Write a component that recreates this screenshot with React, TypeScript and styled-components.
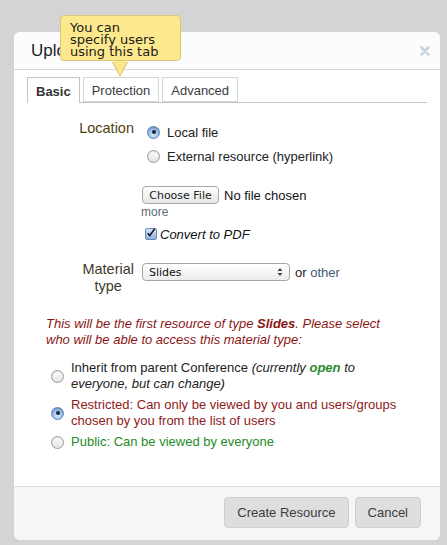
import styled, { createGlobalStyle } from "styled-components";

const GlobalStyle = createGlobalStyle`
  html, body {
    margin: 0;
    padding: 0;
    background: #d4d4d4;
  }
  body {
    font-family: "Liberation Sans", Arial, sans-serif;
    font-size: 13px;
    color: #222;
  }
`;

const Page = styled.div`
  width: 447px;
  height: 545px;
  padding: 32px 0 0 14px;
  box-sizing: border-box;
  position: relative;
`;

const Dialog = styled.div`
  display: flex;
  flex-direction: column;
  width: 426px;
  height: 508px;
  background: #fff;
  border-radius: 6px;
  overflow: hidden;
`;

const Header = styled.div`
  display: flex;
  align-items: center;
  justify-content: space-between;
  height: 37px;
  padding: 0 10px 0 17px;
  background: #fcfcfc;
  border-bottom: 1px solid #d8d8d8;
`;

const Title = styled.div`
  font-size: 17px;
  color: #1e1e1e;
`;

const Body = styled.div`
  flex: 1;
  padding: 7px 13px 0;
`;

const TabBar = styled.div`
  display: flex;
  gap: 3px;
  height: 26px;
  border-bottom: 1px solid #c4c4c4;
  box-sizing: border-box;
`;

const Tab = styled.div<{ $active?: boolean }>`
  display: flex;
  align-items: center;
  padding: 0 8px;
  height: ${(p) => (p.$active ? "26px" : "25px")};
  box-sizing: border-box;
  border: 1px solid ${(p) => (p.$active ? "#c4c4c4" : "#d6d6d6")};
  border-bottom: ${(p) => (p.$active ? "none" : "1px solid #d6d6d6")};
  background: #fff;
  font-weight: ${(p) => (p.$active ? "bold" : "normal")};
  color: ${(p) => (p.$active ? "#333" : "#3c3c3c")};
  font-size: 13px;
  margin-bottom: ${(p) => (p.$active ? "-1px" : "0")};
  padding-top: 1px;
`;

const FormGrid = styled.div`
  display: grid;
  grid-template-columns: 115px 1fr;
  margin-top: 17px;
`;

const Label = styled.div`
  text-align: right;
  padding-right: 8px;
  color: #4f3f12;
  font-size: 14.5px;
  line-height: 16px;
`;

const LabelBlock = styled.span`
  display: inline-block;
  text-align: center;
  line-height: 17px;
  color: #3f3a2a;
`;

const Fields = styled.div`
  display: flex;
  flex-direction: column;
`;

const OptionRow = styled.label`
  display: flex;
  align-items: center;
  gap: 7px;
  height: 24px;
  padding-left: 5px;
  color: #222;
`;

const RadioDot = styled.span<{ $checked?: boolean }>`
  display: inline-flex;
  align-items: center;
  justify-content: center;
  flex: 0 0 auto;
  width: 13px;
  height: 13px;
  border-radius: 50%;
  box-sizing: border-box;
  border: 1px solid ${(p) => (p.$checked ? "#5b7fae" : "#9a9a9a")};
  background: ${(p) =>
    p.$checked
      ? "radial-gradient(circle at 50% 70%, #d6e8fb 0%, #8fb6e6 60%, #6d9bd6 100%)"
      : "linear-gradient(#fdfdfd, #e2e2e2)"};
  box-shadow: inset 0 1px 1px rgba(0, 0, 0, 0.12);

  &::after {
    content: "";
    display: ${(p) => (p.$checked ? "block" : "none")};
    width: 4px;
    height: 4px;
    border-radius: 50%;
    background: #1c2636;
  }
`;

const FileRow = styled.div`
  display: flex;
  align-items: center;
  gap: 5px;
  margin-top: 17px;
  height: 20px;
`;

const FileButton = styled.span`
  display: inline-flex;
  align-items: center;
  justify-content: center;
  width: 77px;
  height: 18px;
  box-sizing: border-box;
  border: 1px solid #a8a8a8;
  border-radius: 4px;
  background: linear-gradient(#ffffff, #e6e6e6);
  font-family: "DejaVu Sans", sans-serif;
  font-size: 11px;
  color: #222;
`;

const FileText = styled.span`
  font-size: 13px;
  color: #111;
`;

const MoreLink = styled.div`
  margin-left: -1px;
  line-height: 14px;
  color: #5f6b78;
  font-size: 12px;
`;

const CheckRow = styled.label`
  display: flex;
  align-items: center;
  gap: 3px;
  height: 18px;
  margin-top: 6px;
  padding-left: 3px;
  font-style: italic;
  color: #111;
`;

const CheckBox = styled.span`
  display: inline-flex;
  align-items: center;
  justify-content: center;
  width: 12px;
  height: 12px;
  box-sizing: border-box;
  border: 1px solid #6f8db3;
  border-radius: 2px;
  background: linear-gradient(#d3e4f7, #8db2e0);
`;

const MaterialGrid = styled(FormGrid)`
  margin-top: 18px;
`;

const SelectRow = styled.div`
  display: flex;
  align-items: center;
  gap: 5px;
  height: 18px;
  margin-top: 2px;
`;

const SelectBox = styled.div`
  display: flex;
  align-items: center;
  justify-content: space-between;
  width: 148px;
  height: 18px;
  box-sizing: border-box;
  padding: 0 6px 0 6px;
  border: 1px solid #a6a6a6;
  border-radius: 4px;
  background: linear-gradient(#ffffff, #ececec);
  font-family: "DejaVu Sans", sans-serif;
  font-size: 11px;
  color: #111;
`;

const OrText = styled.span`
  color: #222;
  font-size: 13px;
`;

const OtherLink = styled.span`
  color: #3d5878;
`;

const Notice = styled.p`
  margin: 21px 32px 0 19px;
  font-style: italic;
  line-height: 16px;
  color: #8a1616;
`;

const RadioList = styled.div`
  display: flex;
  flex-direction: column;
  gap: 5px;
  margin: 12px 19px 0 24px;
`;

const AccessOption = styled.div<{ $tone?: "red" | "green" }>`
  display: flex;
  align-items: center;
  gap: 7px;
  line-height: 16px;
  color: ${(p) =>
    p.$tone === "red" ? "#8e1b1b" : p.$tone === "green" ? "#1f8a28" : "#222"};
`;

const Open = styled.b`
  color: #2a8b2a;
`;

const Footer = styled.div`
  display: flex;
  justify-content: flex-end;
  gap: 6px;
  height: 54px;
  box-sizing: border-box;
  padding: 10px 19px 0 0;
  background: #f6f6f6;
  border-top: 1px solid #dcdcdc;
`;

const Button = styled.span`
  display: inline-flex;
  align-items: center;
  height: 31px;
  box-sizing: border-box;
  padding: 0 12px;
  border: 1px solid #d0d0d0;
  border-radius: 4px;
  background: #dedede;
  color: #3c3c3c;
  font-size: 13px;
`;

const Tooltip = styled.div`
  position: absolute;
  left: 60px;
  top: 15px;
  width: 121px;
  height: 46px;
  box-sizing: border-box;
  padding: 6px 8px 0 9px;
  background: #fde98d;
  border: 1px solid #dcc676;
  border-radius: 4px;
  font-family: "DejaVu Sans", sans-serif;
  font-size: 13px;
  line-height: 12px;
  color: #1a1a1a;

  &::before,
  &::after {
    content: "";
    position: absolute;
    border-style: solid;
    border-color: transparent;
  }
  &::before {
    left: 51px;
    top: 46px;
    border-width: 15px 8px 0 8px;
    border-top-color: #dcc676;
  }
  &::after {
    left: 52px;
    top: 45px;
    border-width: 14px 7px 0 7px;
    border-top-color: #fde98d;
  }
`;

const CloseIcon = () => (
  <svg width="10" height="10" viewBox="0 0 10 10">
    <path d="M1.5 1.5 L8.5 8.5 M8.5 1.5 L1.5 8.5" stroke="#c9d2df" strokeWidth="2.6" strokeLinecap="round" />
  </svg>
);

const CheckMark = () => (
  <svg width="12" height="12" viewBox="0 0 12 12" style={{ marginTop: -2 }}>
    <path d="M2 6.2 L4.6 9 L10.5 0.8" stroke="#111" strokeWidth="1.8" fill="none" />
  </svg>
);

const SelectArrows = () => (
  <svg width="6" height="10" viewBox="0 0 6 10">
    <path d="M0.5 4 L3 1 L5.5 4 Z M0.5 6 L3 9 L5.5 6 Z" fill="#444" />
  </svg>
);

export default function App() {
  return (
    <Page>
      <GlobalStyle />
      <Dialog>
        <Header>
          <Title>Upload Material</Title>
          <CloseIcon />
        </Header>
        <Body>
          <TabBar>
            <Tab $active>Basic</Tab>
            <Tab>Protection</Tab>
            <Tab>Advanced</Tab>
          </TabBar>

          <FormGrid>
            <Label>Location</Label>
            <Fields>
              <OptionRow>
                <RadioDot $checked />
                Local file
              </OptionRow>
              <OptionRow>
                <RadioDot />
                External resource (hyperlink)
              </OptionRow>
              <FileRow>
                <FileButton>Choose File</FileButton>
                <FileText>No file chosen</FileText>
              </FileRow>
              <MoreLink>more</MoreLink>
              <CheckRow>
                <CheckBox>
                  <CheckMark />
                </CheckBox>
                Convert to PDF
              </CheckRow>
            </Fields>
          </FormGrid>

          <MaterialGrid>
            <Label>
              <LabelBlock>
                Material
                <br />
                type
              </LabelBlock>
            </Label>
            <div>
              <SelectRow>
                <SelectBox>
                  Slides
                  <SelectArrows />
                </SelectBox>
                <OrText>
                  or <OtherLink>other</OtherLink>
                </OrText>
              </SelectRow>
            </div>
          </MaterialGrid>

          <Notice>
            This will be the first resource of type <b>Slides</b>. Please select who will be able to access this material type:
          </Notice>

          <RadioList>
            <AccessOption>
              <RadioDot />
              <span>
                Inherit from parent Conference <i>(currently <Open>open</Open> to everyone, but can change)</i>
              </span>
            </AccessOption>
            <AccessOption $tone="red">
              <RadioDot $checked />
              <span>Restricted: Can only be viewed by you and users/groups chosen by you from the list of users</span>
            </AccessOption>
            <AccessOption $tone="green">
              <RadioDot />
              <span>Public: Can be viewed by everyone</span>
            </AccessOption>
          </RadioList>
        </Body>
        <Footer>
          <Button>Create Resource</Button>
          <Button>Cancel</Button>
        </Footer>
      </Dialog>
      <Tooltip>
        You can
        <br />
        specify users
        <br />
        using this tab
      </Tooltip>
    </Page>
  );
}
